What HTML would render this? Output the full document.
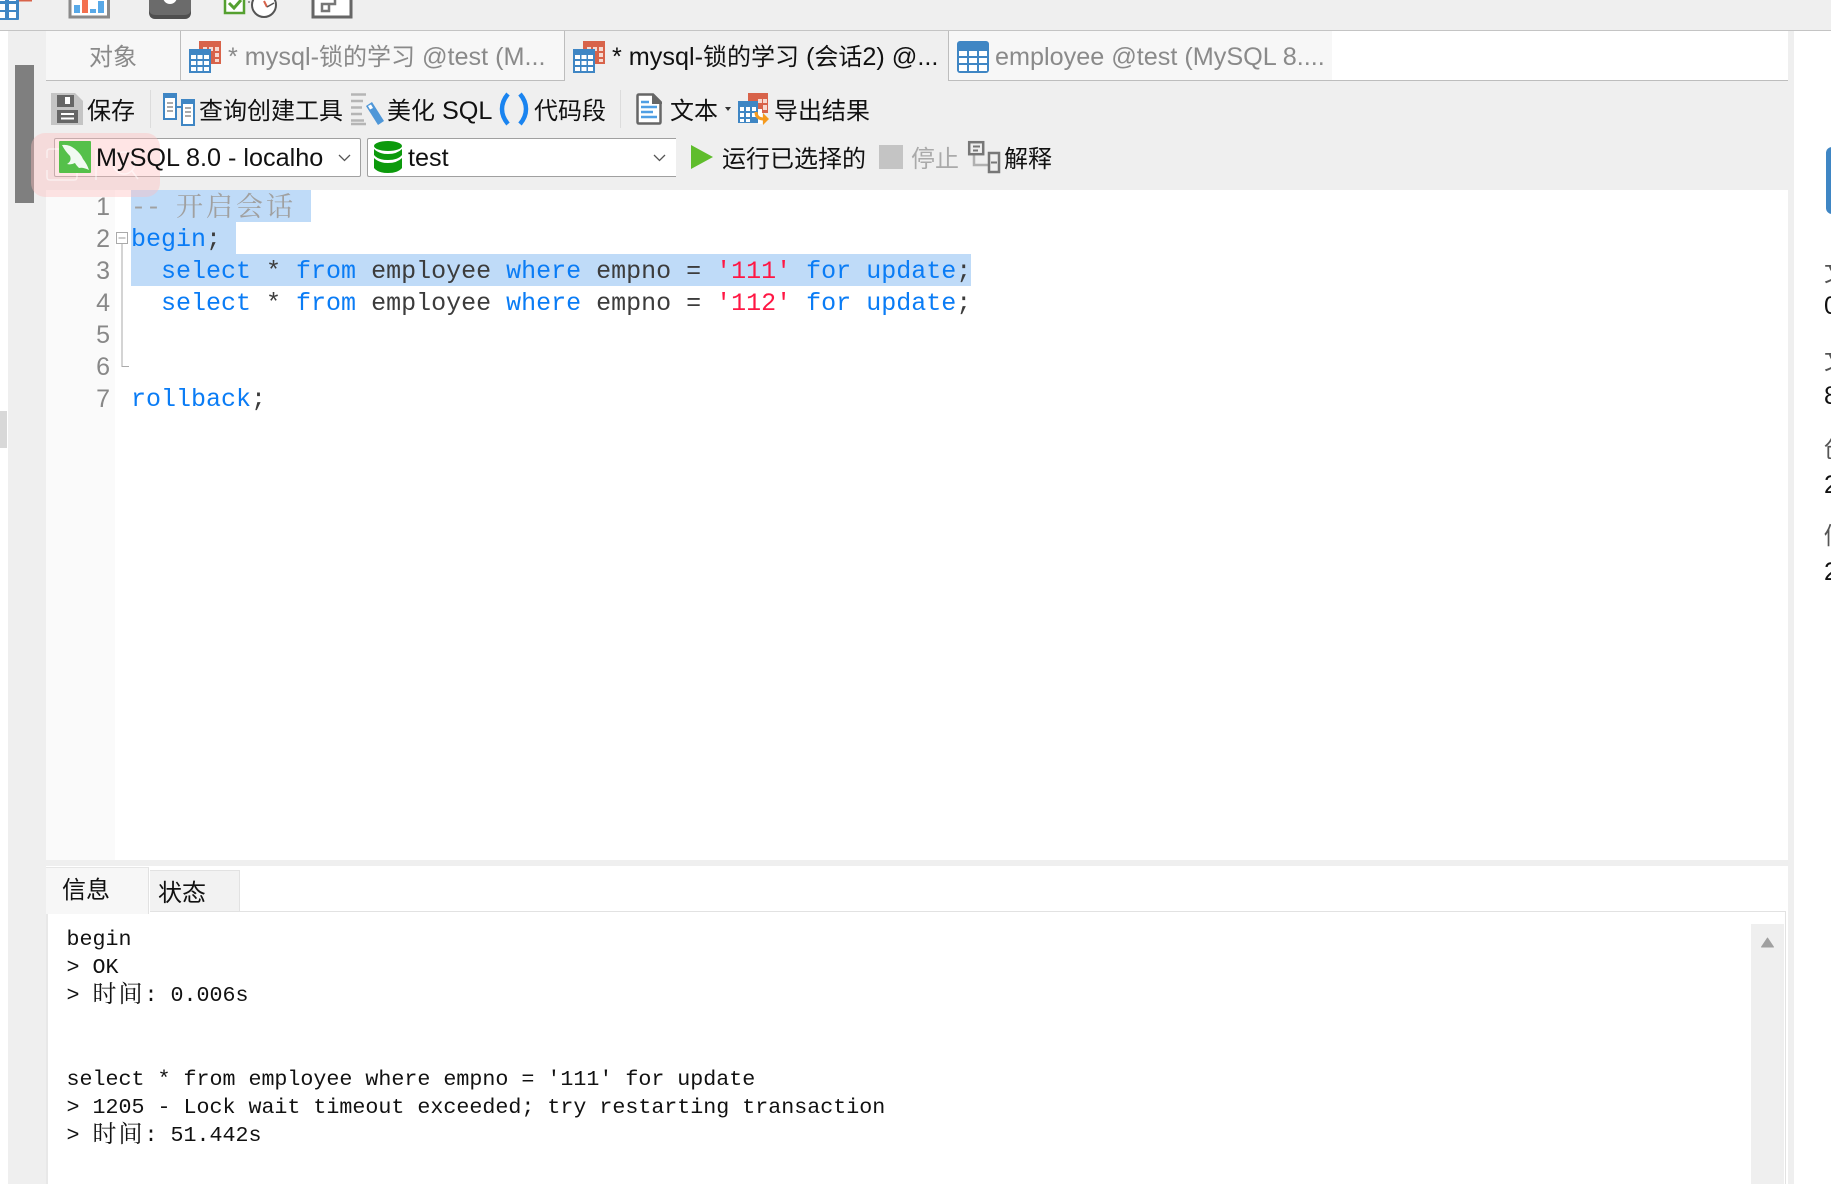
<!DOCTYPE html>
<html><head><meta charset="utf-8"><style>
html,body{margin:0;padding:0;background:#fff}
body{position:relative;width:1831px;height:1184px;overflow:hidden;font-family:"Liberation Sans","Noto Sans CJK SC",sans-serif;color:#111}
div,span.a,svg.a{position:absolute}
.t{position:absolute;white-space:nowrap;font-size:24px;line-height:32px}
.t i{font-style:normal;font-size:25.2px}
.g{color:#8a8a8a}
.code{position:absolute;left:131px;white-space:pre;font:25px/32px "Liberation Mono",monospace;color:#3c3c3c}
.k{color:#0a7cf5}.s{color:#ff1744}
.n{position:absolute;left:60px;width:50px;text-align:right;font-size:25px;line-height:32px;color:#888}
.con{position:absolute;left:66.5px;white-space:pre;font:21.667px/28px "Liberation Mono",monospace;color:#111}
.cj{font-family:"Noto Serif CJK SC",serif;font-size:24px;letter-spacing:2px;line-height:0;position:relative;top:1px}
svg.a{overflow:visible}
</style></head><body>
<svg width="0" height="0" style="position:absolute"><defs>
<symbol id="tb" viewBox="0 0 32 32"><rect x="10" width="22" height="23" fill="#d8634a"/><g fill="#f7d9d0"><rect x="14" y="6" width="4" height="4"/><rect x="20" y="6" width="4" height="4"/><rect x="26" y="6" width="4" height="4"/><rect x="26" y="12" width="4" height="4"/><rect x="26" y="18" width="4" height="3"/></g><rect y="8" width="22" height="24" fill="#3f86c4"/><g fill="#fff"><rect x="2" y="14" width="5" height="4"/><rect x="8.500" y="14" width="5" height="4"/><rect x="15" y="14" width="5" height="4"/><rect x="2" y="20" width="5" height="4"/><rect x="8.500" y="20" width="5" height="4"/><rect x="15" y="20" width="5" height="4"/><rect x="2" y="26" width="5" height="4"/><rect x="8.500" y="26" width="5" height="4"/><rect x="15" y="26" width="5" height="4"/></g></symbol>
</defs></svg>

<!-- top bar -->
<div style="left:0;top:0;width:1831px;height:30px;background:#efefef;border-bottom:1px solid #c4c4c4"></div>
<svg class="a" style="left:0;top:0" width="360" height="24">
<rect x="19" y="-2" width="13" height="3.500" fill="#d8634a"/>
<rect x="-4" y="-4" width="23" height="24" rx="1" fill="#3f86c4"/>
<g fill="#fff"><rect x="-2" y="-2" width="7" height="3"/><rect x="9" y="-2" width="7" height="3"/><rect x="-2" y="4" width="7" height="6"/><rect x="9" y="4" width="7" height="6"/><rect x="-2" y="12" width="7" height="6"/><rect x="9" y="12" width="7" height="6"/></g>
<path d="M70 -2V17H108.500V-2" fill="#fff" stroke="#8a8a8a" stroke-width="3"/>
<rect x="74" y="5" width="6" height="8" fill="#58a9e8"/><rect x="82" y="0" width="6" height="13" fill="#f4704e"/><rect x="90" y="9" width="6" height="4" fill="#58a9e8"/><rect x="98" y="1" width="6" height="12" fill="#58a9e8"/>
<path d="M149 -2H191V12Q191 19 184 19H156Q149 19 149 12Z" fill="#6b6b6b"/><path d="M149 9Q149 15 156 15H184Q191 15 191 9V12Q191 19 184 19H156Q149 19 149 12Z" fill="#4f4f4f"/><circle cx="170" cy="-3" r="7" fill="#fff"/>
<path d="M225 -2V13H244V-2" fill="#fff" stroke="#55a030" stroke-width="2.500"/><path d="M229 3L234 8L241 0" fill="none" stroke="#55a030" stroke-width="3"/>
<circle cx="264" cy="5" r="12" fill="#fff" stroke="#555" stroke-width="2"/><path d="M264 1L267 7" stroke="#d8634a" stroke-width="2"/><path d="M267 7L274 3" stroke="#555" stroke-width="1.500"/><path d="M250 2h-2M250 -1h-2" stroke="#999" stroke-width="2"/>
<path d="M313 -2V17H351V-2" fill="#fff" stroke="#666" stroke-width="3"/>
<path d="M322 4h7v7h-7zM329 4h6v-6" fill="none" stroke="#777" stroke-width="2.500"/>
</svg>

<!-- left -->
<div style="left:8px;top:31px;width:38px;height:1153px;background:#efefef"></div>
<div style="left:15px;top:65px;width:19px;height:138px;background:#7f7f7f"></div>
<div style="left:0;top:411px;width:7px;height:37px;background:#d8d8d8"></div>

<!-- right -->
<div style="left:1788px;top:31px;width:6px;height:1153px;background:#efefef"></div>
<div style="left:1826px;top:147px;width:12px;height:67px;background:#3f86c4;border-radius:6px"></div>
<div class="t" style="left:1824px;top:258px;color:#555">文件</div><div class="t" style="left:1824px;top:290px"><i>0 bytes</i></div>
<div class="t" style="left:1824px;top:346px;color:#555">文件</div><div class="t" style="left:1824px;top:380px"><i>8 KB</i></div>
<div class="t" style="left:1824px;top:434px;color:#555">创建</div><div class="t" style="left:1824px;top:469px"><i>2022</i></div>
<div class="t" style="left:1824px;top:521px;color:#555">修改</div><div class="t" style="left:1824px;top:556px"><i>2022</i></div>

<!-- tab strip -->
<div style="left:46px;top:31px;width:1742px;height:49px;background:#fff;border-bottom:1px solid #bdbdbd"></div>
<div style="left:46px;top:31px;width:134px;height:49px;background:#f7f7f7;border-right:1px solid #bdbdbd;border-bottom:1px solid #bdbdbd"></div>
<div style="left:181px;top:31px;width:383px;height:49px;background:#f7f7f7;border-right:1px solid #bdbdbd;border-bottom:1px solid #bdbdbd"></div>
<div style="left:565px;top:31px;width:383px;height:50px;background:#efefef;border-right:1px solid #bdbdbd"></div>
<div style="left:949px;top:31px;width:383px;height:49px;background:#f7f7f7;border-bottom:1px solid #bdbdbd"></div>
<div class="t g" style="left:89px;top:42px">对象</div>
<svg class="a" style="left:189px;top:41px" width="32" height="32"><use href="#tb"/></svg>
<div class="t g" style="left:228px;top:41px"><i>* mysql-</i>锁的学习<i> @test (M...</i></div>
<svg class="a" style="left:573px;top:41px" width="32" height="32"><use href="#tb"/></svg>
<div class="t" style="left:612px;top:41px"><i>* mysql-</i>锁的学习<i> (</i>会话<i>2) @...</i></div>
<svg class="a" style="left:957px;top:41px" width="32" height="32" viewBox="0 0 32 32"><rect width="32" height="32" rx="3" fill="#3f86c4"/><g fill="#fff"><rect x="2" y="10" width="8" height="5"/><rect x="12" y="10" width="8" height="5"/><rect x="22" y="10" width="8" height="5"/><rect x="2" y="17" width="8" height="5"/><rect x="12" y="17" width="8" height="5"/><rect x="22" y="17" width="8" height="5"/><rect x="2" y="24" width="8" height="6"/><rect x="12" y="24" width="8" height="6"/><rect x="22" y="24" width="8" height="6"/></g></svg>
<div class="t g" style="left:995px;top:41px"><i>employee @test (MySQL 8....</i></div>

<!-- toolbars -->
<div style="left:46px;top:81px;width:1742px;height:109px;background:#efefef"></div>
<svg class="a" style="left:51px;top:93px" width="32" height="32" viewBox="0 0 32 32"><path d="M0 0H24L32 8V32H0Z" fill="#c4c4c4"/><path d="M6 2H23V14H6Z" fill="#666"/><rect x="14" y="4" width="5" height="7" fill="#fff"/><path d="M6 17H27V30H6Z" fill="#666"/><path d="M10 21H23M10 25.500H23" stroke="#fff" stroke-width="2"/></svg>
<div class="t" style="left:87px;top:96px">保存</div>
<div style="left:149.500px;top:90px;width:1px;height:38px;background:#dcdcdc"></div>
<svg class="a" style="left:163px;top:93px" width="32" height="32" viewBox="0 0 32 32"><rect x="1" y="1" width="12" height="25" fill="#fff" stroke="#3f86c4" stroke-width="2"/><rect width="14" height="5" fill="#3f86c4"/><rect x="19" y="7" width="12" height="25" fill="#fff" stroke="#3f86c4" stroke-width="2"/><rect x="18" y="6" width="14" height="5" fill="#3f86c4"/><path d="M13 14H18" stroke="#3f86c4" stroke-width="2"/><path d="M4 10H10M4 14H10M4 18H10M22 15H28M22 19H28M22 23H28" stroke="#aaa" stroke-width="2"/></svg>
<div class="t" style="left:199px;top:96px">查询创建工具</div>
<svg class="a" style="left:351px;top:93px" width="34" height="32" viewBox="0 0 34 32"><path d="M0 1.500H15M0 8H12M0 14.500H11M0 21H11M0 27.500H13M0 31H15" stroke="#b5b5b5" stroke-width="2.500" fill="none"/><path d="M15 13L21 9L33 28L27 32Z" fill="#4f97d8"/><path d="M17 13L20 11.500L22 15L19 16.500Z" fill="#fff"/></svg>
<div class="t" style="left:387px;top:95px">美化<i> SQL</i></div>
<svg class="a" style="left:500px;top:93px" width="28" height="32" viewBox="0 0 28 32" fill="none" stroke="#1a84f0" stroke-width="4.500"><path d="M8 1Q2 8 2 16T8 31"/><path d="M20 1Q26 8 26 16T20 31"/></svg>
<div class="t" style="left:534px;top:96px">代码段</div>
<div style="left:620px;top:90px;width:1px;height:38px;background:#dcdcdc"></div>
<svg class="a" style="left:636px;top:93px" width="26" height="32" viewBox="0 0 26 32"><path d="M1.500 3Q1.500 1.500 3 1.500H17L24.500 9V29Q24.500 30.500 23 30.500H3Q1.500 30.500 1.500 29Z" fill="#fff" stroke="#666" stroke-width="2.500"/><path d="M16 1H18L26 9V11H16Z" fill="#666"/><path d="M5 9H13M5 14H21M5 19H17M5 24H21" stroke="#4f9fe4" stroke-width="2.500"/></svg>
<div class="t" style="left:670px;top:96px">文本</div>
<svg class="a" style="left:725px;top:107px" width="6" height="4"><path d="M0 0H6L3 4Z" fill="#333"/></svg>
<svg class="a" style="left:738px;top:93px" width="32" height="32" viewBox="0 0 32 32"><rect x="10" width="20" height="20" fill="#d8634a"/><g fill="#f7d9d0"><rect x="20" y="6" width="4" height="4"/><rect x="25" y="6" width="4" height="4"/><rect x="25" y="12" width="4" height="5"/></g><rect y="8" width="20" height="22" fill="#3f86c4"/><rect x="20" y="16" width="4" height="15" fill="#fff"/><g fill="#fff"><rect x="2" y="14" width="4" height="4"/><rect x="8" y="14" width="4" height="4"/><rect x="14" y="14" width="4" height="4"/><rect x="2" y="20" width="4" height="4"/><rect x="8" y="20" width="4" height="4"/><rect x="14" y="20" width="4" height="4"/><rect x="2" y="26" width="4" height="3"/><rect x="8" y="26" width="4" height="3"/></g><path d="M18 19Q18 26 26 26" fill="none" stroke="#f59a1e" stroke-width="3"/><path d="M25 20L31 26L25 32Z" fill="#f59a1e"/></svg>
<div class="t" style="left:774px;top:96px">导出结果</div>

<!-- combos -->
<div style="left:54px;top:138px;width:305px;height:37px;background:#fff;border:1px solid #a0a0a0;border-radius:2px"></div>
<svg class="a" style="left:59px;top:141px;z-index:2" width="32" height="32" viewBox="0 0 32 32"><rect width="32" height="32" rx="1" fill="#55c04a"/><path d="M3 4Q10 3 16 8Q22 13 24 18Q28 23 30 29Q24 26 20 27Q17 24 16 22Q12 24 8 23Q13 20 11 15Q6 10 3 4Z" fill="#fff" opacity=".92"/></svg>
<div class="t" style="left:96px;top:142px;z-index:2"><i>MySQL 8.0 - localho</i></div>
<svg class="a" style="left:338px;top:154px" width="13" height="8"><path d="M1 1L6.500 6.500L12 1" fill="none" stroke="#555" stroke-width="1.300"/></svg>
<div style="left:367px;top:138px;width:308px;height:37px;background:#fff;border:1px solid #a0a0a0;border-right:0;border-radius:2px 0 0 2px"></div>
<svg class="a" style="left:374px;top:141px" width="28" height="32" viewBox="0 0 28 32" fill="#0c9a0c"><ellipse cx="14" cy="5" rx="14" ry="5"/><path d="M0 8Q5 13 14 13T28 8V14Q24 19 14 19T0 14Z"/><path d="M0 17Q5 22 14 22T28 17V27Q24 32 14 32T0 27Z"/></svg>
<div class="t" style="left:408px;top:142px"><i>test</i></div>
<svg class="a" style="left:653px;top:154px" width="13" height="8"><path d="M1 1L6.500 6.500L12 1" fill="none" stroke="#555" stroke-width="1.300"/></svg>
<svg class="a" style="left:691px;top:145px" width="22" height="24"><path d="M0 0L22 12L0 24Z" fill="#5fbd2c"/></svg>
<div class="t" style="left:722px;top:144px">运行已选择的</div>
<div style="left:879px;top:145px;width:24px;height:24px;background:#c4c4c4"></div>
<div class="t" style="left:911px;top:144px;color:#aaa">停止</div>
<svg class="a" style="left:968px;top:141px" width="32" height="32" viewBox="0 0 32 32" fill="none"><path d="M6 13V24H20" stroke="#b0b0b0" stroke-width="2.500"/><rect x="1.200" y="1.200" width="14" height="12" fill="#efefef" stroke="#777" stroke-width="2.500"/><path d="M5 5.500H12M5 9.500H10" stroke="#777" stroke-width="2"/><rect x="21" y="12" width="10" height="19" fill="#efefef" stroke="#777" stroke-width="2.500"/><path d="M23 21.500H29" stroke="#777" stroke-width="2"/></svg>
<div class="t" style="left:1004px;top:144px">解释</div>

<!-- editor -->
<div style="left:46px;top:190px;width:1742px;height:670px;background:#fff"></div>
<div style="left:46px;top:190px;width:69px;height:670px;background:#fafafa"></div>
<div style="left:131px;top:190px;width:180px;height:32px;background:#bfdbf8"></div>
<div style="left:131px;top:222px;width:105px;height:32px;background:#bfdbf8"></div>
<div style="left:131px;top:254px;width:840px;height:32px;background:#bfdbf8"></div>
<div class="n" style="top:191px">1</div><div class="n" style="top:223px">2</div><div class="n" style="top:255px">3</div><div class="n" style="top:287px">4</div><div class="n" style="top:319px">5</div><div class="n" style="top:351px">6</div><div class="n" style="top:383px">7</div>
<svg class="a" style="left:116px;top:232px" width="14" height="136"><rect x=".5" y=".5" width="11" height="11" fill="#fff" stroke="#aaa"/><path d="M2.500 6H9.500" stroke="#999"/><path d="M6 12V134.500H13" fill="none" stroke="#aaa"/></svg>
<div class="code" style="top:192px;color:#a0a0a0">-- <span style="font-family:'Noto Serif CJK SC',serif;font-size:27px;letter-spacing:3px;line-height:0;position:relative;top:2px">开启会话</span></div>
<div class="code" style="top:224px"><span class="k">begin</span>;</div>
<div class="code" style="top:256px">  <span class="k">select</span> * <span class="k">from</span> employee <span class="k">where</span> empno = <span class="s">'111'</span> <span class="k">for</span> <span class="k">update</span>;</div>
<div class="code" style="top:288px">  <span class="k">select</span> * <span class="k">from</span> employee <span class="k">where</span> empno = <span class="s">'112'</span> <span class="k">for</span> <span class="k">update</span>;</div>
<div class="code" style="top:384px"><span class="k">rollback</span>;</div>

<!-- separator -->
<div style="left:46px;top:860px;width:1742px;height:6px;background:#efefef"></div>

<!-- bottom -->
<div style="left:46px;top:866px;width:1742px;height:318px;background:#fff"></div>
<div style="left:240px;top:911px;width:1546px;height:1px;background:#e2e2e2"></div>
<div style="left:46px;top:912px;width:2px;height:272px;background:#e8e8e8"></div>
<div style="left:1785px;top:911px;width:1px;height:273px;background:#e2e2e2"></div>
<div style="left:46px;top:867px;width:103px;height:47px;background:#f7f7f7;border-top:1px solid #e6e6e6;border-right:1px solid #e2e2e2;box-sizing:border-box"></div>
<div style="left:150px;top:870px;width:90px;height:42px;background:#f2f2f2;border-top:1px solid #e2e2e2;border-right:1px solid #e2e2e2;border-bottom:1px solid #e2e2e2;box-sizing:border-box"></div>
<div class="t" style="left:62px;top:875px">信息</div>
<div class="t" style="left:158px;top:878px">状态</div>
<div style="left:1751px;top:924px;width:33px;height:260px;background:#efefef"></div>
<svg class="a" style="left:1761px;top:937px" width="13" height="11"><path d="M6.500 1L12.500 10H.5Z" fill="#a0a0a0" stroke="#a0a0a0" stroke-linejoin="round"/></svg>
<div class="con" style="top:926px">begin</div>
<div class="con" style="top:954px">&gt; OK</div>
<div class="con" style="top:982px">&gt; <span class="cj">时间</span>: 0.006s</div>
<div class="con" style="top:1066px">select * from employee where empno = '111' for update</div>
<div class="con" style="top:1094px">&gt; 1205 - Lock wait timeout exceeded; try restarting transaction</div>
<div class="con" style="top:1122px">&gt; <span class="cj">时间</span>: 51.442s</div>

<!-- translucent overlay -->
<div style="left:31px;top:133px;width:129px;height:64px;border-radius:14px;background:rgba(255,190,190,.4)"></div>
<svg class="a" style="left:46px;top:148px;opacity:.55" width="100" height="34" fill="none" stroke="#fff" stroke-width="1.500"><path d="M1 10V4Q1 1 4 1H14M20 1H28Q31 1 31 4V10M1 22V29Q1 32 4 32H28Q31 32 31 29V22"/><path d="M50 2V32"/><circle cx="78" cy="15" r="11"/><path d="M86 23L92 31"/></svg>
</body></html>
